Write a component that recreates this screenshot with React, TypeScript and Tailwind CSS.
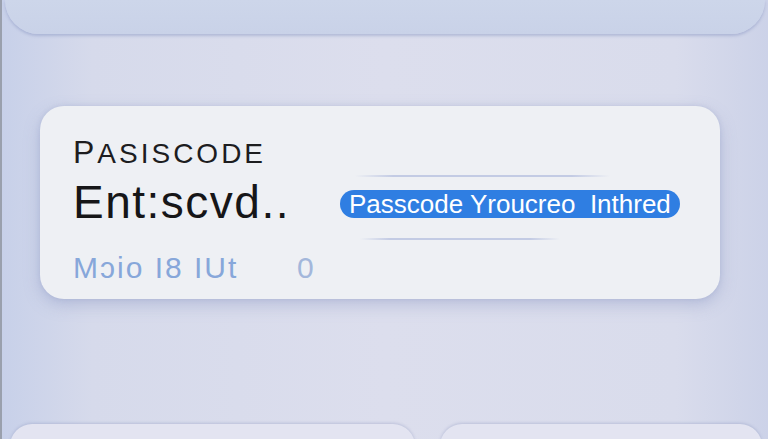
export default function App() {
  const sans = { fontFamily: '"Liberation Sans", Arial, sans-serif' };

  return (
    <div
      className="relative h-[439px] w-[768px] overflow-hidden bg-[linear-gradient(90deg,#c7d0e9_0%,#d6daeb_12%,#dcdeed_50%,#d9dcec_88%,#ccd2e8_100%)]"
      style={sans}
    >
      <div className="flex h-full flex-col border-l-2 border-[#9aa0ad]">
        {/* top card, cut off by the window */}
        <div className="mx-[3px] h-[34px] shrink-0 rounded-b-[34px] bg-[linear-gradient(180deg,#cdd6ea_0%,#c9d2e8_100%)] shadow-[0_2px_3px_rgba(130,145,190,0.45)]" />

        {/* passcode card */}
        <div className="ml-[38px] mt-[72px] h-[193px] w-[680px] shrink-0 rounded-[24px] bg-[#eef0f4] px-[33px] pt-[30px] shadow-[0_6px_16px_rgba(120,135,185,0.35),0_0_4px_rgba(140,150,190,0.25)]">
          <div className="flex items-baseline leading-none tracking-[3px] text-[#1d1d1f]">
            <span className="text-[32px]">P</span>
            <span className="text-[28px]">ASISCODE</span>
          </div>

          <div className="mt-[7px] flex items-start">
            <div className="mt-[4px] w-[267px] text-[46px] leading-none tracking-[1.5px] text-[#161618]">
              Ent:scvd..
            </div>
            <div className="flex flex-col items-start">
              <div className="ml-[15px] h-[2px] w-[255px] bg-[linear-gradient(90deg,transparent,#c3cbe4_15%,#c3cbe4_85%,transparent)]" />
              <div className="mt-[13px] flex h-[28px] items-center rounded-full bg-[#2f7ee2] px-[9px] text-[26px] leading-none tracking-[0px] text-white">
                Passcode Yroucreo&nbsp; Inthred
              </div>
              <div className="ml-[20px] mt-[20px] h-[2px] w-[200px] bg-[linear-gradient(90deg,transparent,#c3cbe4_15%,#c3cbe4_85%,transparent)]" />
            </div>
          </div>

          <div className="mt-[13px] flex text-[30px] leading-none tracking-[2px]">
            <span className="w-[224px] text-[#87a7da]">Mɔio I8 IUt</span>
            <span className="text-[#a3b7db]">0</span>
          </div>
        </div>

        {/* bottom cards, cut off */}
        <div className="mt-[125px] flex shrink-0 gap-[25px] pl-[8px] pr-[6px]">
          <div className="h-[40px] w-[405px] rounded-t-[22px] bg-[#e3e4f1] shadow-[0_-1px_3px_rgba(140,150,190,0.4)]" />
          <div className="h-[40px] flex-1 rounded-t-[22px] bg-[#e3e4f1] shadow-[0_-1px_3px_rgba(140,150,190,0.4)]" />
        </div>
      </div>
    </div>
  );
}
